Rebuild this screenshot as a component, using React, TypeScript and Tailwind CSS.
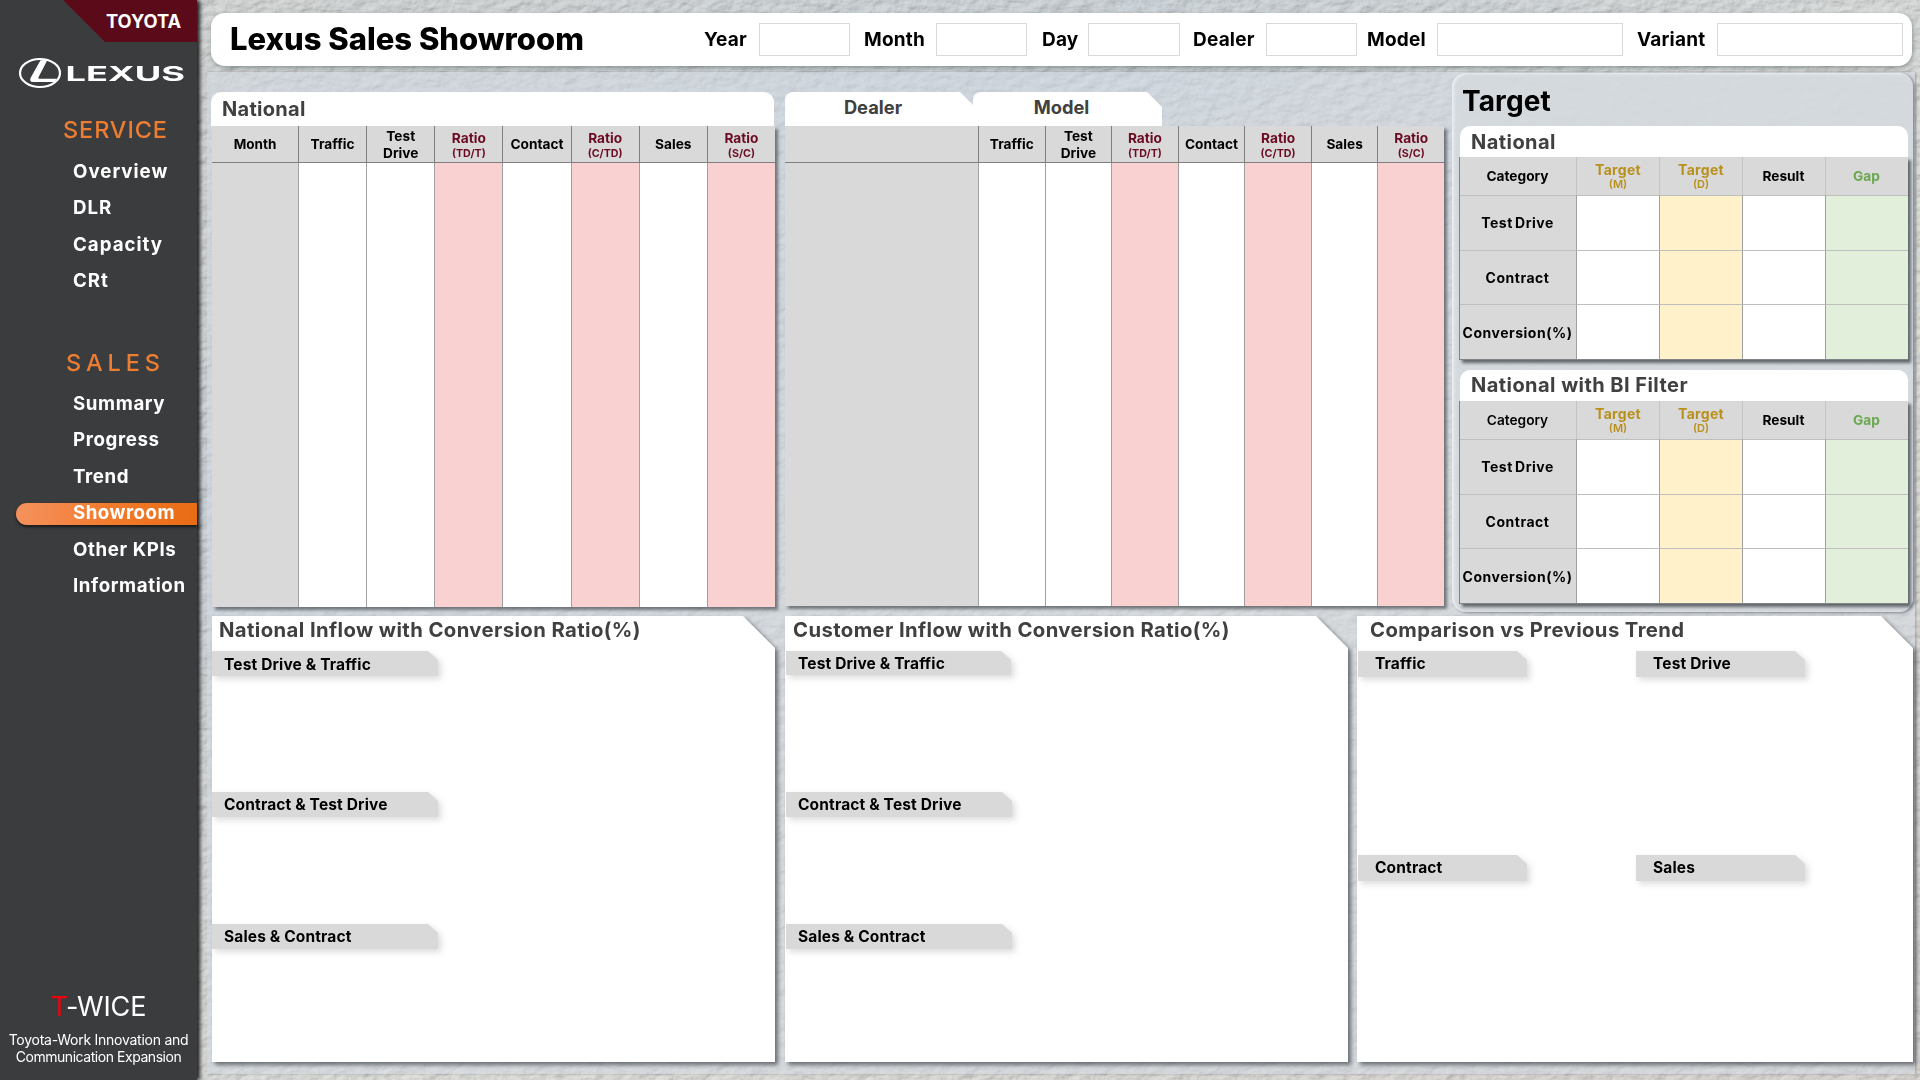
import React from "react";

type Head = { label: string; sub?: string; tone?: string };

const SERVICE = ["Overview", "DLR", "Capacity", "CRt"];
const SALES = ["Summary", "Progress", "Trend", "Showroom", "Other KPIs", "Information"];

const FUNNEL: Head[] = [
  { label: "Traffic" },
  { label: "Test Drive" },
  { label: "Ratio", sub: "(TD/T)" },
  { label: "Contact" },
  { label: "Ratio", sub: "(C/TD)" },
  { label: "Sales" },
  { label: "Ratio", sub: "(S/C)" },
];

const FILTERS = [
  { name: "Year", label: "w-[55px]", box: "w-[91px]" },
  { name: "Month", label: "w-[86px] pl-[14px]", box: "w-[91px]" },
  { name: "Day", label: "w-[61px] pl-[15px]", box: "w-[92px]" },
  { name: "Dealer", label: "w-[86px] pl-[13px]", box: "w-[91px]" },
  { name: "Model", label: "w-[80px] pl-[10px]", box: "w-[186px]" },
  { name: "Variant", label: "w-[94px] pl-[14px]", box: "w-[186px]" },
];

function Texture() {
  return (
    <svg className="absolute inset-0 h-full w-full" aria-hidden="true">
      <defs>
        <filter id="plaster" x="0" y="0" width="100%" height="100%">
          <feTurbulence type="fractalNoise" baseFrequency="0.07 0.11" numOctaves="5" seed="8" result="n" />
          <feDiffuseLighting in="n" surfaceScale="1.7" diffuseConstant="1.02" lightingColor="#ffffff">
            <feDistantLight azimuth="225" elevation="58" />
          </feDiffuseLighting>
        </filter>
        <linearGradient id="wall" x1="0" y1="0" x2="1" y2="1">
          <stop offset="0" stopColor="#dcdddb" />
          <stop offset="0.3" stopColor="#d3dadf" />
          <stop offset="0.6" stopColor="#e4e4e0" />
          <stop offset="1" stopColor="#dfdbd7" />
        </linearGradient>
      </defs>
      <rect width="100%" height="100%" fill="url(#wall)" />
      <rect width="100%" height="100%" filter="url(#plaster)" className="mix-blend-multiply" />
    </svg>
  );
}

function LexusLogo() {
  return (
    <svg className="ml-[18px] mt-[15px] h-[32px] w-[170px]" viewBox="0 0 170 32" fill="none">
      <ellipse cx="22" cy="16" rx="20" ry="14" stroke="#fff" strokeWidth="2.2" />
      <path d="M22.5 3.2 L29.5 2.8 L20.5 20.3 Q19.8 21.8 21.5 21.8 L39 21.8 L36.5 25 L15 25 Q10.8 24.6 12.8 20.4 Z" fill="#fff" />
      <text
        x="47.5"
        y="23.8"
        textLength="119.5"
        lengthAdjust="spacingAndGlyphs"
        fill="#fff"
        className="font-['Inter'] text-[20px] font-bold"
      >
        LEXUS
      </text>
    </svg>
  );
}

function Sidebar() {
  return (
    <aside className="relative z-10 flex h-full w-[197px] shrink-0 flex-col bg-[#3b3c3e] text-white shadow-[3px_0_4px_rgba(0,0,0,0.85)]">
      <div className="ml-[63px] h-[42px] bg-[#5a0a18] pl-[43px] text-[18.3px] font-bold leading-[43px] [clip-path:polygon(0_0,100%_0,100%_100%,42px_100%)]">
        TOYOTA
      </div>
      <LexusLogo />
      <h2 className="mt-[26px] pl-[63px] text-[23.5px] font-medium leading-[30px] tracking-[0.9px] text-[#ec7d31]">SERVICE</h2>
      <nav className="mt-[8px] flex flex-col">
        {SERVICE.map((s) => (
          <a key={s} className="h-[36.3px] pl-[73px] text-[18.7px] font-bold leading-[38px] tracking-[1px]">
            {s}
          </a>
        ))}
      </nav>
      <h2 className="mt-[49.8px] pl-[66px] text-[23.5px] font-medium leading-[30px] tracking-[4.9px] text-[#ec7d31]">SALES</h2>
      <nav className="mt-[7px] flex flex-col">
        {SALES.map((s) =>
          s === "Showroom" ? (
            <a key={s} className="flex h-[36.4px] items-center text-[18.7px] font-bold tracking-[0.5px]">
              <span className="ml-[16px] mt-[4px] h-[22px] w-[182px] rounded-l-full bg-linear-to-r from-[#f4925c] via-[#f37b2c] to-[#e86c12] pl-[57px] leading-[19px] shadow-[0_2px_3px_rgba(0,0,0,0.6)]">
                {s}
              </span>
            </a>
          ) : (
            <a key={s} className="h-[36.4px] pl-[73px] text-[18.7px] font-bold leading-[38px] tracking-[0.6px]">
              {s}
            </a>
          ),
        )}
      </nav>
      <div className="mt-auto pb-[15px] text-center">
        <p className="text-[27px] leading-[32px] tracking-[-0.1px]">
          <span className="text-[#e8050f]">T</span>-WICE
        </p>
        <p className="mt-[8px] whitespace-nowrap text-[14px] leading-[17px] tracking-[-0.25px]">
          Toyota-Work Innovation and
          <br />
          <span className="tracking-[-0.45px]">Communication Expansion</span>
        </p>
      </div>
    </aside>
  );
}

function Header() {
  return (
    <header className="ml-[14px] flex h-[53px] w-[1701px] items-center rounded-[14px] bg-white shadow-[1px_2px_4px_rgba(90,100,100,0.55)]">
      <h1 className="w-[493px] whitespace-nowrap pl-[19px] text-[31px] font-extrabold leading-[50px] tracking-[0px] text-black">
        <span className="-mt-px block">Lexus Sales Showroom</span>
      </h1>
      {FILTERS.map((f) => (
        <label key={f.name} className="flex items-center text-[19px] font-bold tracking-[0.2px] text-black">
          <span className={`pt-[2px] ${f.label}`}>{f.name}</span>
          <span className={`h-[33px] border border-[#d9d9d9] bg-white ${f.box}`} />
        </label>
      ))}
    </header>
  );
}

function FunnelTable({ first, cols, size }: { first?: string; cols: string; size: string }) {
  return (
    <div className={`grid grid-rows-[37px_1fr] bg-[#d9d9d9] shadow-[3px_3px_3px_rgba(70,75,80,0.7)] ${cols} ${size}`}>
      <div className="flex items-center justify-center border-b border-[#7f7f7f] text-[13.5px] font-bold">
        {first}
      </div>
      {FUNNEL.map((h, i) => (
        <div
          key={i}
          className={`flex flex-col items-center justify-center border-b border-l border-[#7f7f7f] text-center text-[13.7px] font-bold leading-[17px] ${h.sub ? "pt-px text-[#6b0b22]" : "text-black"}`}
        >
          {h.label === "Test Drive" ? (
            <span className="pt-px">
              Test
              <br />
              Drive
            </span>
          ) : (
            <span>{h.label}</span>
          )}
          {h.sub && <span className="text-[10.7px] leading-[13px]">{h.sub}</span>}
        </div>
      ))}
      <div />
      {FUNNEL.map((h, i) => (
        <div key={i} className={`border-l border-[#a0a0a0] ${h.sub ? "bg-[#f9d1d1]" : "bg-white"}`} />
      ))}
    </div>
  );
}

function NationalCard() {
  return (
    <section className="w-[563px]">
      <h3 className="h-[34px] w-[563px] rounded-t-[10px] bg-white pl-[11px] text-[20px] font-bold leading-[34px] tracking-[0.3px] text-[#404040]">
        National
      </h3>
      <FunnelTable first="Month" cols="grid-cols-[86px_repeat(7,1fr)]" size="ml-px h-[481px] w-[563px]" />
    </section>
  );
}

function DealerCard() {
  return (
    <section className="ml-[11px] w-[659px]">
      <div className="flex h-[34px] text-center text-[18.3px] font-bold leading-[31px] text-[#404040]">
        <div className="w-[188px] rounded-tl-[8px] bg-white pr-[12px] [clip-path:polygon(0_0,175px_0,100%_13px,100%_100%,0_100%)]">
          Dealer
        </div>
        <div className="w-[189px] rounded-tl-[8px] bg-white pr-[12px] [clip-path:polygon(0_0,174px_0,100%_15px,100%_100%,0_100%)]">
          Model
        </div>
      </div>
      <FunnelTable cols="grid-cols-[193px_repeat(7,1fr)]" size="h-[480px]" />
    </section>
  );
}

function TargetTable({ title, light }: { title: string; light?: boolean }) {
  const heads: Head[] = [
    { label: "Category", tone: "text-black" },
    { label: "Target", sub: "(M)", tone: "text-[#b8901c]" },
    { label: "Target", sub: "(D)", tone: "text-[#b8901c]" },
    { label: "Result", tone: "text-black" },
    { label: "Gap", tone: "text-[#6aa84f]" },
  ];
  return (
    <section className="w-[449px]">
      <h3
        className={`ml-px h-[31px] w-[448px] rounded-t-[10px] bg-white pl-[11px] text-[20px] font-bold tracking-[0.45px] text-[#404040] ${light ? "leading-[30px]" : "leading-[32px]"}`}
      >
        {title}
      </h3>
      <div className="grid h-[203px] grid-cols-[116px_repeat(4,1fr)] grid-rows-[38px_repeat(3,1fr)] border-b border-l border-[#808488] bg-[#d9d9d9] shadow-[3px_3px_3px_rgba(60,65,70,0.75)]">
        {heads.map((h, i) => (
          <div
            key={i}
            className={`flex flex-col items-center justify-center leading-[16px] ${h.sub ? "pt-px text-[14px] tracking-[0.3px]" : "pr-px text-[13.7px]"} ${i ? "border-l border-[#c4c4c4]" : ""} ${light && i === 0 ? "font-semibold" : "font-bold"} ${h.tone}`}
          >
            <span>{h.label}</span>
            {h.sub && <span className="text-[11px] font-semibold leading-[13px] tracking-normal">{h.sub}</span>}
          </div>
        ))}
        {["Test Drive", "Contract", "Conversion(%)"].map((r) => (
          <React.Fragment key={r}>
            <div
              className={`flex items-center justify-center whitespace-nowrap border-t border-[#bfbfbf] pr-px text-[14px] font-bold tracking-[0.5px] text-black ${r === "Test Drive" ? "[word-spacing:-1.5px]" : ""}`}
            >
              {r}
            </div>
            <div className="border-l border-t border-l-[#a0a0a0] border-t-[#bfbfbf] bg-white" />
            <div className="border-l border-t border-l-[#a0a0a0] border-t-[#bfbfbf] bg-[#fff1c9]" />
            <div className="border-l border-t border-l-[#a0a0a0] border-t-[#bfbfbf] bg-white" />
            <div className="border-l border-t border-l-[#a0a0a0] border-t-[#bfbfbf] bg-[#e2efda]" />
          </React.Fragment>
        ))}
      </div>
    </section>
  );
}

function TargetPanel() {
  return (
    <section className="-mt-[19px] ml-[8px] h-[539px] w-[461px] rounded-[14px] bg-[#d5d9de]/85 pl-[7px] shadow-[2px_1px_3px_rgba(110,118,125,0.8),inset_2px_1px_3px_rgba(240,245,250,0.8)]">
      <h2 className="h-[53px] pl-[3px] text-[28px] font-bold leading-[56px] tracking-[0.1px] text-black">Target</h2>
      <TargetTable title="National" />
      <div className="h-[10px]" />
      <TargetTable title="National with BI Filter" light />
    </section>
  );
}

function Tag({ text, size }: { text: string; size: string }) {
  return (
    <div className="drop-shadow-[3px_3px_3px_rgba(0,0,0,0.14)]">
      <div
        className={`bg-[#d9d9d9] text-[15.5px] font-bold tracking-[0.15px] text-black [clip-path:polygon(0_0,calc(100%-10px)_0,100%_9px,100%_100%,0_100%)] ${size}`}
      >
        {text}
      </div>
    </div>
  );
}

function Sheet({ title, width, pad, children }: { title: string; width: string; pad: string; children: React.ReactNode }) {
  return (
    <section className={`drop-shadow-[3px_3px_2px_rgba(70,75,80,0.75)] ${width}`}>
      <div className="h-[446px] bg-white [clip-path:polygon(0_0,calc(100%-32px)_0,100%_32px,100%_100%,0_100%)]">
        <h3 className={`h-[35px] whitespace-nowrap text-[20.3px] font-bold leading-[28px] tracking-[0.4px] text-[#404040] ${pad}`}>{title}</h3>
        {children}
      </div>
    </section>
  );
}

function InflowTags({ top, first }: { top: string; first: string }) {
  return (
    <div className={top}>
      <div className="h-[141px]"><Tag text="Test Drive & Traffic" size={first} /></div>
      <div className="h-[132px]"><Tag text="Contract & Test Drive" size="h-[25px] w-[226px] pl-[12px] leading-[26px]" /></div>
      <Tag text="Sales & Contract" size="h-[25px] w-[226px] pl-[12px] leading-[26px]" />
    </div>
  );
}

export default function App() {
  return (
    <div className="relative flex h-[1080px] w-[1920px] overflow-hidden bg-[#cdd1d4] font-['Inter',sans-serif] text-black">
      <Texture />
      <Sidebar />
      <main className="relative w-[1723px] pt-[13px]">
        <Header />
        <div className="ml-[10px] mt-[6px] h-[1002px] w-[1708px] bg-[#d3dae4]/55 pl-[4px] pt-[20px] shadow-[1px_0_2px_rgba(120,125,130,0.6)]">
          <div className="flex h-[524px]">
            <NationalCard />
            <DealerCard />
            <TargetPanel />
          </div>
          <div className="ml-px flex">
            <Sheet title="National Inflow with Conversion Ratio(%)" width="w-[563px]" pad="pl-[7px]">
              <InflowTags top="" first="h-[25px] w-[226px] pl-[12px] leading-[27px]" />
            </Sheet>
            <Sheet title="Customer Inflow with Conversion Ratio(%)" width="ml-[10px] w-[563px]" pad="pl-[8px]">
              <InflowTags top="ml-px" first="h-[24px] w-[225px] pl-[12px] leading-[25px]" />
            </Sheet>
            <Sheet title="Comparison vs Previous Trend" width="ml-[9px] w-[556px]" pad="pl-[13px]">
              <div className="ml-px grid grid-cols-[278px_169px] grid-rows-[204px_26px]">
                {["Traffic", "Test Drive", "Contract", "Sales"].map((t) => (
                  <Tag key={t} text={t} size="h-[26px] w-[169px] pl-[17px] leading-[26px]" />
                ))}
              </div>
            </Sheet>
          </div>
        </div>
      </main>
    </div>
  );
}
